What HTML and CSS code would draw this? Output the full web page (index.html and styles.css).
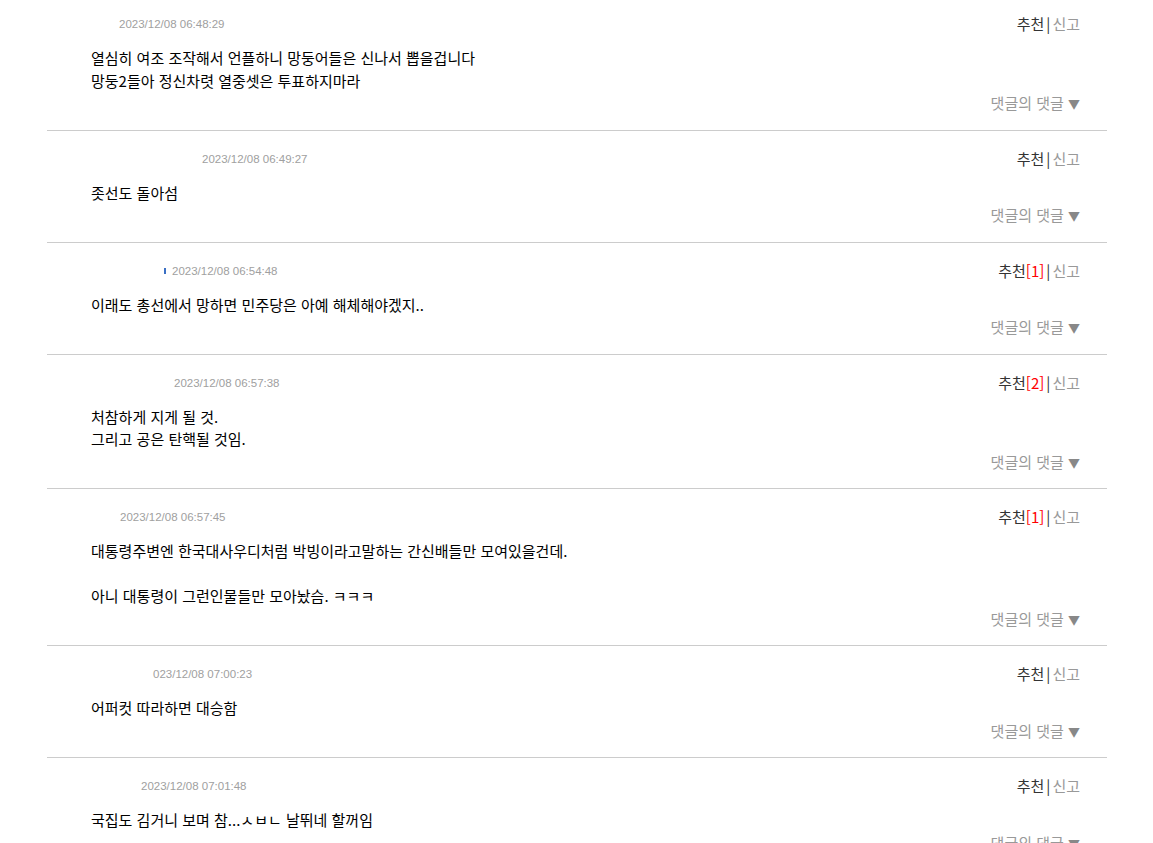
FILE: index.html
```html
<!DOCTYPE html>
<html lang="ko">
<head>
  <meta charset="UTF-8">
  <title>댓글</title>
  <link rel="stylesheet" href="styles.css">
</head>
<body>
  <div class="comments">
    <div class="comment">
      <div class="head">
        <span class="meta" style="padding-left:28px"><span class="date">2023/12/08 06:48:29</span></span>
        <span class="actions"><span class="rec">추천</span><span class="bar">|</span><span class="report">신고</span></span>
      </div>
      <div class="text">열심히 여조 조작해서 언플하니 망둥어들은 신나서 뽑을겁니다<br>망둥2들아 정신차렷 열중셋은 투표하지마라</div>
      <div class="reply">댓글의 댓글 <span class="arrow">▼</span></div>
    </div>

    <div class="comment">
      <div class="head">
        <span class="meta" style="padding-left:111px"><span class="date">2023/12/08 06:49:27</span></span>
        <span class="actions"><span class="rec">추천</span><span class="bar">|</span><span class="report">신고</span></span>
      </div>
      <div class="text">좃선도 돌아섬</div>
      <div class="reply">댓글의 댓글 <span class="arrow">▼</span></div>
    </div>

    <div class="comment">
      <div class="head">
        <span class="meta" style="padding-left:73px"><span class="mark"></span><span class="date">2023/12/08 06:54:48</span></span>
        <span class="actions"><span class="rec">추천</span><span class="count">[1]</span><span class="bar">|</span><span class="report">신고</span></span>
      </div>
      <div class="text">이래도 총선에서 망하면 민주당은 아예 해체해야겠지..</div>
      <div class="reply">댓글의 댓글 <span class="arrow">▼</span></div>
    </div>

    <div class="comment">
      <div class="head">
        <span class="meta" style="padding-left:83px"><span class="date">2023/12/08 06:57:38</span></span>
        <span class="actions"><span class="rec">추천</span><span class="count">[2]</span><span class="bar">|</span><span class="report">신고</span></span>
      </div>
      <div class="text">처참하게 지게 될 것.<br>그리고 공은 탄핵될 것임.</div>
      <div class="reply">댓글의 댓글 <span class="arrow">▼</span></div>
    </div>

    <div class="comment">
      <div class="head">
        <span class="meta" style="padding-left:29px"><span class="date">2023/12/08 06:57:45</span></span>
        <span class="actions"><span class="rec">추천</span><span class="count">[1]</span><span class="bar">|</span><span class="report">신고</span></span>
      </div>
      <div class="text">대통령주변엔 한국대사우디처럼 박빙이라고말하는 간신배들만 모여있을건데.<br><br>아니 대통령이 그런인물들만 모아놨슴. ㅋㅋㅋ</div>
      <div class="reply">댓글의 댓글 <span class="arrow">▼</span></div>
    </div>

    <div class="comment">
      <div class="head">
        <span class="meta" style="padding-left:62px"><span class="date">023/12/08 07:00:23</span></span>
        <span class="actions"><span class="rec">추천</span><span class="bar">|</span><span class="report">신고</span></span>
      </div>
      <div class="text">어퍼컷 따라하면 대승함</div>
      <div class="reply">댓글의 댓글 <span class="arrow">▼</span></div>
    </div>

    <div class="comment">
      <div class="head">
        <span class="meta" style="padding-left:50px"><span class="date">2023/12/08 07:01:48</span></span>
        <span class="actions"><span class="rec">추천</span><span class="bar">|</span><span class="report">신고</span></span>
      </div>
      <div class="text">국집도 김거니 보며 참...ㅅㅂㄴ 날뛰네 할꺼임</div>
      <div class="reply">댓글의 댓글 <span class="arrow">▼</span></div>
    </div>
  </div>
</body>
</html>
```

FILE: styles.css
```css
/* Comment list */
body {
  margin: 0;
  background: #fff;
  font-family: "Noto Sans CJK KR", "Noto Sans", sans-serif;
  color: #000;
}
.comments {
  width: 1060px;
  margin: -4px 0 0 47px;
}
.comment {
  padding: 18px 27px 15.5px 44px;
  border-bottom: 1px solid #ccc;
}
.head {
  display: flex;
  justify-content: space-between;
  align-items: center;
  height: 20px;
}
.meta {
  display: flex;
  align-items: center;
}
.date {
  font-family: "Liberation Sans", Arial, sans-serif;
  font-size: 11.5px;
  color: #a0a0a0;
}
.mark {
  width: 2px;
  height: 6px;
  margin-right: 6px;
  background: #3a6fc4;
}
.actions {
  font-size: 15px;
  line-height: 20px;
}
.rec {
  color: #333;
}
.count {
  color: #f00;
}
.bar {
  color: #333;
  margin: 0 2px;
}
.report {
  color: #999;
}
.text {
  margin-top: 13px;
  font-size: 15px;
  line-height: 22.5px;
}
.reply {
  height: 22px;
  text-align: right;
  font-size: 15px;
  line-height: 22px;
  color: #999;
}
.arrow {
  font-size: 12px;
  line-height: 1;
  color: #888;
}
```
